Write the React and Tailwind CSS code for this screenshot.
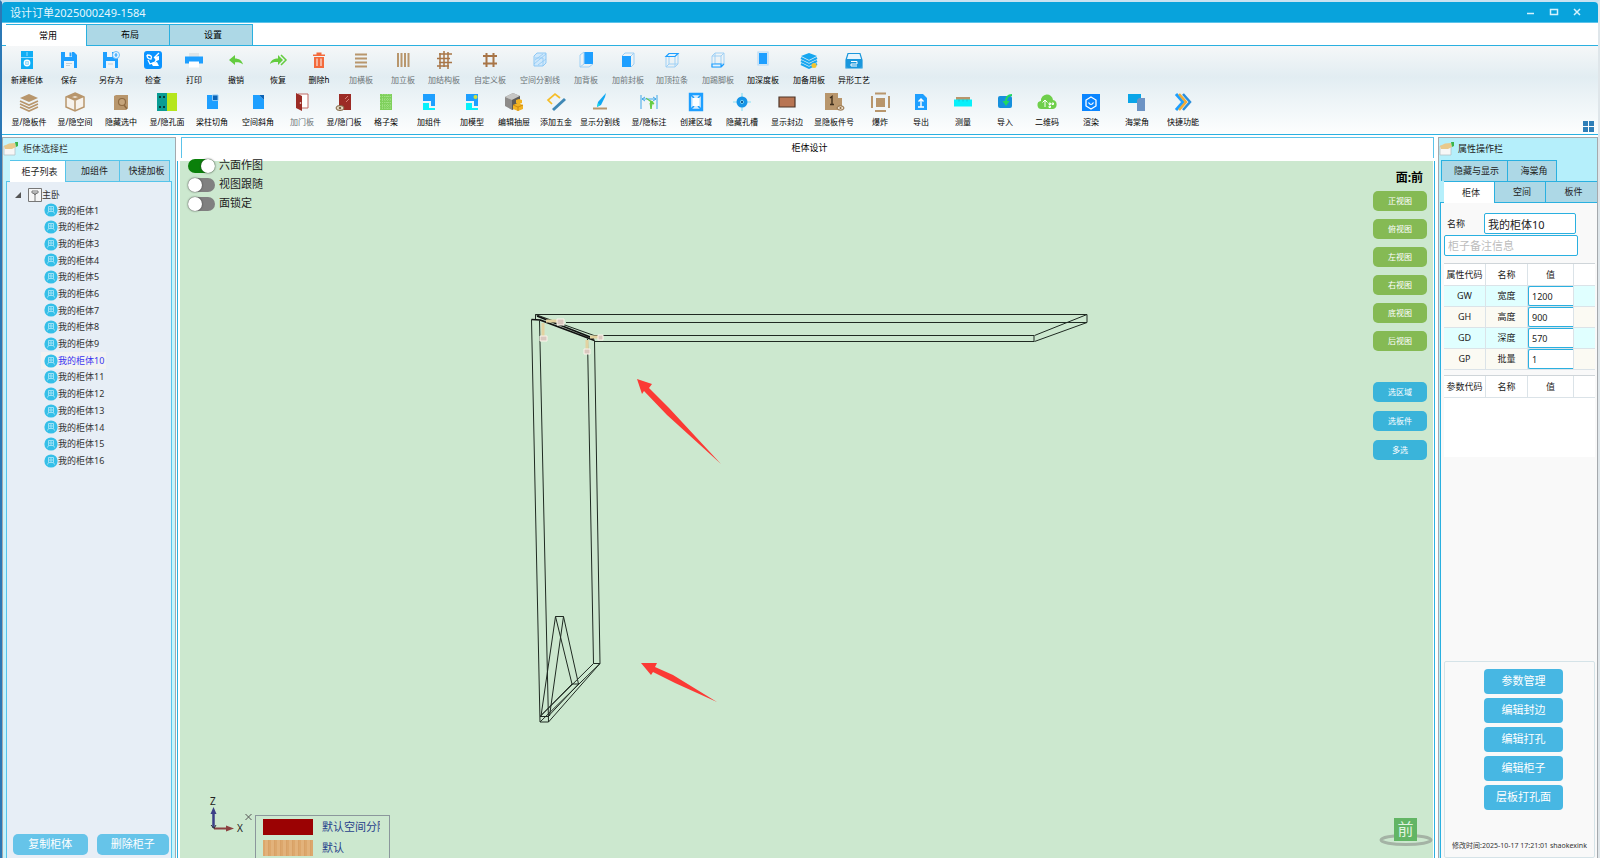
import React, { useState } from 'react';
import clsx from 'clsx';

const BLUE = '#1e9fff';
const WOOD = '#b8966c';

const Icon = ({ children }) => (
  <svg viewBox="0 0 18 18" className="h-[18px] w-[18px] overflow-visible" aria-hidden="true">
    {children}
  </svg>
);

const icons = {
  newCabinet: (
    <>
      <path d="M3 0h12v6H3zM3 7h12v11H3z" fill="#10aef5" />
      <path d="M3 6.500h12M9 1v4" stroke="#8fdcff" />
      <circle cx="9" cy="12" r="2.700" fill="none" stroke="#fff" strokeWidth="1.400" />
      <path d="M9 10v4M7 12h4" stroke="#fff" />
    </>
  ),
  save: (
    <>
      <path d="M1 1h13l3 3v13H1z" fill={BLUE} />
      <path d="M5 1h7v5H5zM4 10h10v7H4z" fill="#eef5fa" />
      <path d="M9.500 1.500h2v4h-2z" fill={BLUE} />
      <path d="M6 12.500h6M6 14.500h4" stroke="#b9c5cc" strokeWidth=".8" />
    </>
  ),
  saveAs: (
    <>
      <path d="M1 1h15v16H1z" fill={BLUE} />
      <path d="M5 1h5v5H5zM4 10h9v7H4z" fill="#eef5fa" />
      <path d="M6 13h5" stroke="#b9c5cc" strokeWidth=".8" />
      <circle cx="14" cy="4" r="3.500" fill="#eaf6ff" stroke="#6bbdf9" strokeWidth="1" />
      <path d="M14 2v4M12.500 4h3" stroke={BLUE} />
    </>
  ),
  check: (
    <>
      <rect width="18" height="18" rx="3" fill="#0a93ff" />
      <path d="M3 4q0 4 4 4 2-4-4-4M15 2l-5 5M4 9l2 4 5-2 3-4" fill="none" stroke="#fff" strokeWidth="1.300" />
      <path d="M10 6l5-1v4l-3 1zM7 12l6-1 2 4H9z" fill="#fff" />
    </>
  ),
  print: (
    <>
      <path d="M4 2h10v4H4z" fill="#dfe5e8" />
      <path d="M0 5.500h18v7H0z" fill={BLUE} />
      <path d="M4 10.500h10v6H4z" fill="#fff" />
    </>
  ),
  undo: <path d="M8 4v3.500c4 0 7 2 8 6-2-2-5-2.500-8-2.200V14L2 9z" fill="#63cc3f" />,
  redo: (
    <>
      <path d="M9 4v3.500C5 7.500 2 9 1 13c2-2 5-2.200 8-2V14l5-5z" fill="#63cc3f" />
      <path d="M12 4l5 5-5 5" fill="none" stroke="#63cc3f" strokeWidth="1.500" />
    </>
  ),
  trash: (
    <>
      <path d="M4 6h10v11H4zM3 3.500h12V5H3zM6.500 1.500h5v2h-5z" fill="#f36a3c" />
      <path d="M7 7.500V15M11 7.500V15" stroke="#fbe3da" strokeWidth="1.200" />
    </>
  ),
  hBoards: <path d="M3 3.500h12M3 7.500h12M3 11.500h12M3 15.500h12" stroke={WOOD} strokeWidth="2" />,
  vBoards: <path d="M4 2v14M7.500 2v14M11 2v14M14.500 2v14" stroke={WOOD} strokeWidth="2" />,
  structure: (
    <path
      d="M4 3h13M2 7.500h13M4 11.500h13M2 15h12M5 2v16M9 0v16M13 1v17"
      stroke="#a87547"
      strokeWidth="1.500"
    />
  ),
  custom: <path d="M2 5h14M2 12.500h14M5.500 2v14M12.500 2v14" stroke="#a87547" strokeWidth="2" />,
  split: (
    <>
      <path d="M3 5l3-3h9v10l-3 3H3z" fill="#cfe8fb" stroke="#8dc8f5" strokeWidth="1" />
      <path d="M3 13L15 3M4 7h8v8M4 9l8-6M7 14l8-6" fill="none" stroke="#8dc8f5" strokeWidth=".8" />
    </>
  ),
  back: (
    <>
      <path d="M7 1h9v12H7z" fill={BLUE} />
      <path d="M3 4l4-3v12l-4 3zM3 16h9l4-3" fill="none" stroke="#9fd0f5" strokeWidth="1" />
    </>
  ),
  front: (
    <>
      <path d="M6 2h9v11l-3 3" fill="none" stroke="#9fd0f5" strokeWidth="1" />
      <path d="M3 5h9v11H3z" fill={BLUE} />
      <path d="M3 5l3-3M12 5l3-3" stroke="#9fd0f5" />
    </>
  ),
  topRail: (
    <>
      <path d="M3 5h9v11H3zM6 2v11h9V2M3 16l3-3M12 16l3-3" fill="none" stroke="#9fd0f5" strokeWidth="1" />
      <path d="M3 5.500h9l3-3H6z" fill="#e4f3fd" stroke={BLUE} strokeWidth="1.200" />
    </>
  ),
  kick: (
    <>
      <path d="M3 5h9v11H3zM6 2h9v11H6zM3 5l3-3M12 5l3-3" fill="none" stroke="#9fd0f5" strokeWidth="1" />
      <path d="M3 13h9v3H3zM12 16l3-3" fill="#e4f3fd" stroke={BLUE} strokeWidth="1.200" />
    </>
  ),
  depth: (
    <>
      <path d="M5 2h8v11H5z" fill={BLUE} />
      <path d="M4 1h10v13H4z" fill="none" stroke="#b5d9f5" strokeWidth="1.200" />
    </>
  ),
  spare: (
    <>
      <path d="M9 2l8 3-8 4-8-4z" fill="#17a7f0" />
      <path d="M1 7l8 4 8-4M1 10l8 4 8-4M1 13l8 4 8-4" fill="none" stroke="#17a7f0" strokeWidth="2" />
      <circle cx="14" cy="14.500" r="2.500" fill="#f3c531" />
    </>
  ),
  special: (
    <>
      <path d="M1 9l2-6.500h12L17 9v8H1z" fill="#e6f4fc" stroke="#1a97dc" strokeWidth="1.200" />
      <path d="M1 8h16v7a2 2 0 0 1-2 2H3a2 2 0 0 1-2-2z" fill="#1a97dc" />
      <path d="M6 10.500h6v2.500H6v2h6" fill="none" stroke="#fff" />
    </>
  ),
  boards: (
    <>
      <path d="M9 1l9 4-9 4-9-4z" fill={WOOD} />
      <path d="M0 8l9 4 9-4M0 11l9 4 9-4M0 14l9 4 9-4" fill="none" stroke={WOOD} strokeWidth="1.600" />
    </>
  ),
  space: (
    <>
      <path d="M9 0l9 4v10l-9 4-9-4V4z" fill="#f6f2ec" stroke={WOOD} strokeWidth="1.500" />
      <path d="M0 4l9 4 9-4-9-4z" fill={WOOD} />
      <path d="M4 4l5-2 5 2-5 2zM9 8v10" fill="#e8dccb" stroke={WOOD} strokeWidth="1.500" />
    </>
  ),
  hideSelected: (
    <>
      <path d="M2 3l2-1h12v13l-2 2H2z" fill={WOOD} />
      <circle cx="10" cy="9" r="3.500" fill="#c5a47b" stroke="#8e6a41" strokeWidth="1.200" />
      <path d="M12 12l3 4" stroke="#8e6a41" strokeWidth="1.500" />
    </>
  ),
  holes: (
    <>
      <path d="M-1 0h10v18H-1z" fill="#0a9c94" />
      <path d="M9 0h10v18H9z" fill="#b5e61d" />
      <path d="M1 3h2v2H1zM5 3h2v2H5zM1 13h2v2H1zM5 13h2v2H5z" fill="#073c3a" />
    </>
  ),
  beam: (
    <>
      <path d="M4 2h11v14H4z" fill={BLUE} />
      <path d="M9.500 2H15v5.500H9.500z" fill="#0b63b5" stroke="#8cc8f5" />
    </>
  ),
  bevel: (
    <>
      <path d="M4 2h6l5 5v9H4z" fill={BLUE} />
      <path d="M10 2h5v5z" fill="#0b63b5" />
    </>
  ),
  door: (
    <>
      <path d="M5 1h10v14H8" fill="#fff" stroke="#c06a64" strokeWidth="1" />
      <path d="M3 0l6 3v15l-6-3z" fill="#9c2b25" />
      <circle cx="7.500" cy="10" r=".8" fill="#fff" />
    </>
  ),
  doorEye: (
    <>
      <path d="M4 1h12v16H4z" fill="#9c2b25" />
      <path d="M10 6l3-3M11 9l3-3" stroke="#d88078" />
      <ellipse cx="5" cy="15" rx="4" ry="2.500" fill="#e5d8c2" stroke="#7d6544" />
      <circle cx="5" cy="15" r="1.200" fill="#7d6544" />
    </>
  ),
  lattice: (
    <>
      <path d="M3 1h12v16H3z" fill="#7fd05c" />
      <path
        d="M3 3.500h12M3 6.500h12M3 9.500h12M3 12.500h12M3 15h12M5.500 1v16M8 1v16M10.500 1v16M13 1v16"
        stroke="#a5e38a"
        strokeWidth=".8"
        strokeDasharray="1 1"
      />
    </>
  ),
  component: (
    <>
      <path d="M3 1h12v12h-4V8H3z" fill={BLUE} />
      <path d="M3 10h6v5h6v2H3z" fill="#08f0fa" />
    </>
  ),
  model: (
    <>
      <path d="M3 1h12v12h-4V8H3z" fill={BLUE} />
      <path d="M3 10h6v5h6v2H3z" fill="#08f0fa" />
      <circle cx="12.500" cy="4" r="2" fill="#d3e23c" />
    </>
  ),
  drawer: (
    <>
      <path d="M0 4l8-4 7 3v9l-8 5-7-4z" fill="#8d8b89" />
      <path d="M0 4l8-4 7 3-8 4z" fill="#c6c6c5" />
      <path d="M7 7l8-4v9l-8 5z" fill="#5d5b59" />
      <path d="M8 12l5-2 5 2v4l-5 2-5-2zM11 7l3-1 3 1v3l-3 1-3-1z" fill="#f2b323" />
      <path d="M8 12l5 2 5-2M13 14v4" fill="none" stroke="#c47f0b" strokeWidth=".8" />
    </>
  ),
  hardware: (
    <>
      <path d="M5 11L1 7l7-6 5 4" fill="none" stroke="#f6bd27" strokeWidth="1.700" />
      <path d="M6 17L18 6" stroke="#3f88b5" strokeWidth="3" />
    </>
  ),
  splitLine: (
    <>
      <path d="M15 0L7 9l-1 5 4-2 4-8z" fill="#11a8f3" />
      <path d="M6 14l1-4 2 2z" fill="#19e0e6" />
      <path d="M2 15.500h14" stroke={WOOD} strokeWidth="2" />
    </>
  ),
  dimension: (
    <>
      <path d="M1 2v14M17 2v14M2 6h14M5 4L2 6l3 2M13 4l3 2-3 2" fill="none" stroke="#3fa7e8" strokeWidth="1" />
      <path d="M6 5l5 4-1 1 4 1-2-3M10 10l1 6 1-5" fill="#63cc3f" stroke="#63cc3f" />
    </>
  ),
  region: (
    <>
      <path d="M3 1h12v16H3z" fill="#d8edfc" stroke={BLUE} strokeWidth="2.400" />
      <path d="M3 1l4 4M15 1l-4 4M3 17l4-4M15 17l-4-4" stroke={BLUE} strokeWidth="1.600" />
      <path d="M6 5h6v8H6z" fill="#fff" />
    </>
  ),
  slot: (
    <>
      <path d="M0 9h18M9 0v18" stroke="#8adff5" strokeWidth="1.200" />
      <circle cx="9" cy="9" r="5.500" fill="#1695e8" />
      <circle cx="9" cy="9" r="1.600" fill="#0b4f8a" stroke="#8ee6ff" strokeWidth=".8" />
    </>
  ),
  edge: <path d="M1 4h16v10H1z" fill="#b87553" stroke="#4e3629" strokeWidth="1.200" />,
  boardNo: (
    <>
      <path d="M0 0h13v17H0zM13 5h4v12h-4z" fill={WOOD} />
      <path d="M5 5l2-1.500v8M5 11.500h4" fill="none" stroke="#3f2f1c" strokeWidth="1.400" />
      <ellipse cx="15.500" cy="15" rx="3.500" ry="2.200" fill="#e9dcc8" stroke="#8e6a41" />
      <circle cx="15.500" cy="15" r="1" fill="#8e6a41" />
    </>
  ),
  explode: (
    <>
      <path d="M5 5h9v9H5z" fill={WOOD} />
      <path d="M4 .5h11M4 18h11" stroke={WOOD} strokeWidth="2" />
      <path d="M1 3v12M18 3v12" fill="none" stroke={WOOD} strokeWidth="2" />
    </>
  ),
  exportFile: (
    <>
      <path d="M3 1h8l4 4v12H3z" fill={BLUE} />
      <path d="M9 14V6M6.500 8.500L9 6l2.500 2.500M6 14h6" fill="none" stroke="#fff" strokeWidth="1.400" />
    </>
  ),
  measure: (
    <>
      <path d="M2 4h14v3H2z" fill={WOOD} />
      <path d="M0 6.500h18v7H0z" fill="#08f0fa" />
      <path d="M5 6.500v2M9 6.500v2M13 6.500v2" stroke="#1ab8c9" strokeWidth=".8" />
    </>
  ),
  importFile: (
    <>
      <rect x="2" y="3" width="14" height="12" rx="2" fill="#1690dd" />
      <path d="M16 2c-4 0-6 2-6 7" fill="none" stroke="#22d860" strokeWidth="2" />
      <path d="M6.500 8h7L10 13z" fill="#22d860" />
    </>
  ),
  qr: (
    <>
      <path d="M4 16a4 4 0 0 1-1-8 6 6 0 0 1 12-1 4.600 4.600 0 0 1 0 9z" fill="#6fcf4b" />
      <path d="M7 14V7M4.500 9.500L7 7l2.500 2.500M11 10h1.500v1.500H11zM14 10h1.500v1.500H14zM11 13h1.500v1.500H11z" fill="none" stroke="#fff" />
    </>
  ),
  render: (
    <>
      <path d="M0 1h18v17H0z" fill="#0a85ff" />
      <path d="M9 4l5 3v6l-5 3-5-3V7z" fill="none" stroke="#fff" strokeWidth="1.300" />
      <path d="M6.500 9.500q2.500 4 5 0" fill="none" stroke="#fff" strokeWidth="1.200" />
    </>
  ),
  begonia: (
    <>
      <path d="M0 1h13v9H0z" fill="#0aa5e8" />
      <path d="M9 7l2-2h6v13H9z" fill="#6c93c4" />
    </>
  ),
  quick: (
    <>
      <path d="M2 1l7 8-7 8" fill="none" stroke={BLUE} strokeWidth="3" />
      <path d="M5 1l7 8-7 8" fill="none" stroke="#f0ac35" strokeWidth="2.500" />
      <path d="M9 1l7 8-7 8" fill="none" stroke="#2b8fdc" strokeWidth="2.500" />
    </>
  ),
};

const toolRows = [
  [
    ['新建柜体', 'newCabinet', 'w-[42px]'],
    ['保存', 'save', 'w-[42px]'],
    ['另存为', 'saveAs', 'w-[42px]'],
    ['检查', 'check', 'w-[42px]'],
    ['打印', 'print', 'w-[40px]'],
    ['撤销', 'undo', 'w-[44px]'],
    ['恢复', 'redo', 'w-[40px]'],
    ['删除h', 'trash', 'w-[42px]'],
    ['加横板', 'hBoards', 'w-[42px]', true],
    ['加立板', 'vBoards', 'w-[42px]', true],
    ['加结构板', 'structure', 'w-[40px]', true],
    ['自定义板', 'custom', 'w-[52px]', true],
    ['空间分割线', 'split', 'w-[48px]', true],
    ['加背板', 'back', 'w-[44px]', true],
    ['加前封板', 'front', 'w-[40px]', true],
    ['加顶拉条', 'topRail', 'w-[48px]', true],
    ['加踢脚板', 'kick', 'w-[44px]', true],
    ['加深度板', 'depth', 'w-[46px]'],
    ['加备用板', 'spare', 'w-[46px]'],
    ['异形工艺', 'special', 'w-[44px]'],
  ],
  [
    ['显/隐板件', 'boards', 'w-[46px]'],
    ['显/隐空间', 'space', 'w-[46px]'],
    ['隐藏选中', 'hideSelected', 'w-[46px]'],
    ['显/隐孔面', 'holes', 'w-[46px]'],
    ['梁柱切角', 'beam', 'w-[44px]'],
    ['空间斜角', 'bevel', 'w-[48px]'],
    ['加门板', 'door', 'w-[40px]', true],
    ['显/隐门板', 'doorEye', 'w-[44px]'],
    ['格子架', 'lattice', 'w-[40px]'],
    ['加组件', 'component', 'w-[46px]'],
    ['加模型', 'model', 'w-[40px]'],
    ['编辑抽屉', 'drawer', 'w-[44px]'],
    ['添加五金', 'hardware', 'w-[40px]'],
    ['显示分割线', 'splitLine', 'w-[48px]'],
    ['显/隐标注', 'dimension', 'w-[50px]'],
    ['创建区域', 'region', 'w-[44px]'],
    ['隐藏孔槽', 'slot', 'w-[48px]'],
    ['显示封边', 'edge', 'w-[42px]'],
    ['显隐板件号', 'boardNo', 'w-[52px]'],
    ['爆炸', 'explode', 'w-[40px]'],
    ['导出', 'exportFile', 'w-[42px]'],
    ['测量', 'measure', 'w-[42px]'],
    ['导入', 'importFile', 'w-[42px]'],
    ['二维码', 'qr', 'w-[42px]'],
    ['渲染', 'render', 'w-[46px]'],
    ['海棠角', 'begonia', 'w-[46px]'],
    ['快捷功能', 'quick', 'w-[46px]'],
  ],
];

const cabinets = Array.from({ length: 16 }, (_, i) => `我的柜体${i + 1}`);

const attributes = [
  { code: 'GW', name: '宽度', value: '1200' },
  { code: 'GH', name: '高度', value: '900' },
  { code: 'GD', name: '深度', value: '570' },
  { code: 'GP', name: '批量', value: '1' },
];

const TitleBar = () => (
  <header className="flex h-[21px] shrink-0 items-center justify-between rounded-t-[4px] border-b border-[#5cc3ea] bg-[#08a3dc] pr-[14px] pl-2 text-white">
    <h1 className="pt-[2px] text-[11px] leading-[18px] text-[#e4f6fd]">设计订单2025000249-1584</h1>
    <div className="flex items-center gap-[9px]">
      <button aria-label="最小化">
        <svg viewBox="0 0 14 14" className="h-[14px] w-[14px]"><path d="M3 8.500h7" stroke="#d5f2fd" strokeWidth="1.500" /></svg>
      </button>
      <button aria-label="最大化">
        <svg viewBox="0 0 14 14" className="h-[14px] w-[14px]"><path d="M3.500 4.500h7v5h-7z" fill="none" stroke="#d5f2fd" strokeWidth="1.500" /></svg>
      </button>
      <button aria-label="关闭">
        <svg viewBox="0 0 14 14" className="h-[14px] w-[14px]"><path d="M4 4l6 6M10 4l-6 6" stroke="#d5f2fd" strokeWidth="1.500" /></svg>
      </button>
    </div>
  </header>
);

const Ribbon = () => (
  <section className="shrink-0 border-b border-[#2ab0e0]">
    <div role="tablist" className="flex h-[23px] items-end border-b border-[#2ab0e0] bg-white pl-1 text-[9px]">
      <button role="tab" aria-selected="true" className="-mb-px h-[22px] w-[81px] border-t border-r border-[#2ab0e0] bg-white pl-1">常用</button>
      <button role="tab" aria-selected="false" className="h-[21px] w-[83px] border-t border-r border-[#2ab0e0] bg-[#add8e6] pl-1">布局</button>
      <button role="tab" aria-selected="false" className="h-[21px] w-[83px] border-t border-r border-[#2ab0e0] bg-[#add8e6] pl-1">设置</button>
    </div>
    <div className="flex items-end justify-between bg-linear-to-b from-[#f5f7f8] via-[#e2edf2] via-35% to-[#fdfefe] pt-[5px] pr-1 pb-[2px] pl-1">
      <div className="flex flex-col gap-[6px] pb-[3px]">
        {toolRows.map((row, i) => (
          <div key={i} className="flex">
            {row.map(([label, icon, width, disabled]) => (
              <button
                key={label}
                disabled={disabled}
                className={clsx('flex shrink-0 flex-col items-center gap-1', width, disabled ? 'text-[#6c7478]' : 'text-black')}
              >
                <Icon>{icons[icon]}</Icon>
                <span className="text-[8px] leading-[14px] whitespace-nowrap">{label}</span>
              </button>
            ))}
          </div>
        ))}
      </div>
      <button aria-label="布局网格" className="grid grid-cols-2 gap-px">
        {[0, 1, 2, 3].map((n) => (
          <span key={n} className="h-[5px] w-[5px] bg-[#2f7fb8]" />
        ))}
      </button>
    </div>
  </section>
);

const HandIcon = () => (
  <svg viewBox="0 0 16 14" className="h-[14px] w-4" aria-hidden="true">
    <path d="M1 4h11v9H1z" fill="#f7f7f7" stroke="#b8c3c7" strokeWidth=".8" />
    <path d="M1 4l5-2.500L12 1l1 4-4 2H2z" fill="#e9c98c" />
    <path d="M12 0h3v4l-2 1z" fill="#3bb54a" />
  </svg>
);

const CabinetIcon = () => (
  <svg viewBox="0 0 14 14" className="h-[14px] w-[14px]" aria-hidden="true">
    <circle cx="7" cy="7" r="6.600" fill="#35bfe8" />
    <path d="M4.500 8.500v-5h5v5M4.500 6h5M7 3.500v5M3.500 10.500l1-2h5l1 2" fill="none" stroke="#9ce1f6" />
  </svg>
);

const CabinetPanel = ({ current, onSelect }) => (
  <aside className="flex w-[174px] shrink-0 flex-col border-t border-r border-l border-[#a5a9ad] bg-[#c5f4fc]">
    <div className="flex h-[22px] shrink-0 items-center gap-1 text-[9px] text-[#333]">
      <HandIcon />
      <h2>柜体选择栏</h2>
    </div>
    <div role="tablist" className="mx-[3px] flex h-[22px] shrink-0 border-b border-[#56c4ea] pl-1 text-[9px] text-[#222]">
      <button role="tab" aria-selected="true" className="-mb-px w-[56px] border-t border-r border-[#56c4ea] bg-white pl-1">柜子列表</button>
      <button role="tab" aria-selected="false" className="w-[54px] border-t border-r border-[#56c4ea] bg-[#b9dde9] pl-1">加组件</button>
      <button role="tab" aria-selected="false" className="w-[50px] border-t border-r border-[#56c4ea] bg-[#b9dde9] pl-1">快捷加板</button>
    </div>
    <div className="mx-[3px] flex grow flex-col border-x border-[#56c4ea] bg-[#e7eef6] pt-[5px] text-[9px] text-[#333]">
      <div className="flex h-[15px] items-center">
        <svg viewBox="0 0 6 6" className="mr-[7px] ml-[8px] h-[6px] w-[6px]" aria-hidden="true"><path d="M6 0v6H0z" fill="#555" /></svg>
        <svg viewBox="0 0 14 14" className="h-[14px] w-[14px]" aria-hidden="true">
          <path d="M.5.5h13v13H.5z" fill="#f5f5f5" stroke="#777" />
          <path d="M7 5v8M4 3h6v2H4zM5 5l2 2 2-2" fill="none" stroke="#777" />
        </svg>
        <span>主卧</span>
      </div>
      <ul className="ml-[34px] grid h-[267px] auto-rows-fr justify-items-start">
        {cabinets.map((name) => (
          <li key={name} className={clsx('flex pr-[2px] pl-[3px]', name === current && 'bg-[#f2f2f2] text-[#3a33f0]')}>
            <button className="flex items-center" onClick={() => onSelect(name)}>
              <CabinetIcon />
              {name}
            </button>
          </li>
        ))}
      </ul>
      <div className="mt-auto flex gap-[9px] pr-[2px] pb-[3px] pl-[6px] text-[11px] text-white">
        <button className="h-[21px] w-[75px] rounded-[5px] bg-[#66c4e9]">复制柜体</button>
        <button className="h-[21px] w-[73px] rounded-[5px] bg-[#66c4e9]">删除柜子</button>
      </div>
    </div>
  </aside>
);

// Wireframe of the selected cabinet, in window coordinates shifted to the canvas.
const Wireframe = () => (
  <svg className="absolute inset-0 h-full w-full" aria-label="柜体线框">
    <g transform="translate(-180 -161)">
      <g fill="none" stroke="#1f2a22" strokeWidth="1">
        <path d="M535.500 320v-5.500H1087v8H566M594 335.500h440v6H594M1034.500 335.500L1087 314.500M1034.500 341.500L1087 322.500" />
        <path d="M535.500 314.500L594 335.500M531.500 319.500L540 722h8.500L539.500 320.500M587.500 339l6 324.500M594.500 340.500L600 663.500h-6.500" />
        <path d="M540 716.500l53.500-53M540 722l60-58.500M548.500 722l51.500-58.500M548.500 716L578.500 684H572l-31 31.500M540 716.500h9" />
        <path d="M541 716l14.500-99.500h8L549.500 716M555.500 616.500L572 684M563.500 616.500l15 67.500" />
      </g>
      <path d="M531.500 319.500l9 .5 54 20.500M540 320l48 18M537 316l57 22.500" fill="none" stroke="#111" strokeWidth="1.600" />
      <g stroke="#e3d2a0" strokeWidth="3" fill="none">
        <path d="M546 321h14M543 323v14M590 337h10M587 340v10" />
      </g>
      <path d="M557 319h7v6h-7zM540 336h7v5h-7zM598 335h5v5h-5zM584 349h6v5h-6z" fill="#d9c8bf" stroke="#fbf3ea" />
      <path d="M637 379l15 5-3 4 20 20 52 56-54-49-23-24-2 3z" fill="#fb3a35" />
      <path d="M641 663h16l-2 4 18 8 44 27-42-19-22-11-2 3z" fill="#fb3a35" />
    </g>
  </svg>
);

const Toggle = ({ label, defaultChecked }) => (
  <label className="flex h-[19px] items-center gap-1 text-[11px] text-[#222]">
    <input
      type="checkbox"
      role="switch"
      defaultChecked={defaultChecked}
      className="h-[14px] w-[27px] appearance-none rounded-full bg-[#808080] before:block before:h-[14px] before:w-[14px] before:rounded-full before:bg-white before:shadow-[0_0_2px_#333] checked:bg-[#0a800a] checked:before:ml-[13px]"
    />
    {label}
  </label>
);

const viewButton = 'h-5 w-[54px] rounded-[5px] text-[8px] text-white';

const DesignView = () => (
  <main className="flex min-w-0 grow flex-col border-x border-[#2ab0e0] bg-white">
    <div className="-mx-px flex h-[24px] shrink-0 items-start bg-white px-[4px] pr-px">
      <h2 className="flex h-[21px] grow items-center justify-center border border-b-0 border-[#5cc3ea] pl-1 text-[9px]">柜体设计</h2>
    </div>
    <div className="relative mr-px ml-[2px] grow bg-[#cce8cf]">
      <Wireframe />
      <div className="absolute -top-[5px] left-[8px] flex flex-col">
        <Toggle label="六面作图" defaultChecked />
        <Toggle label="视图跟随" />
        <Toggle label="面锁定" />
      </div>
      <div className="absolute top-[9px] right-[6px] flex flex-col gap-2">
        <strong className="mr-1 h-[13px] text-right text-[12px] leading-[16px]">面:前</strong>
        {['正视图', '俯视图', '左视图', '右视图', '底视图', '后视图'].map((view) => (
          <button key={view} className={clsx(viewButton, 'bg-[#85ba54]')}>{view}</button>
        ))}
        <div className="mt-[23px] flex flex-col gap-[9px]">
          {['选区域', '选板件', '多选'].map((mode) => (
            <button key={mode} className={clsx(viewButton, 'bg-[#3ab4da]')}>{mode}</button>
          ))}
        </div>
      </div>
      <div className="absolute bottom-0 left-[24px] flex items-end">
        <svg viewBox="0 0 41 44" className="mb-[20px] h-[44px] w-[41px]" aria-label="坐标轴">
          <text x="6" y="11" fontSize="10" fill="#222">Z</text>
          <text x="33" y="38" fontSize="10" fill="#222">X</text>
          <path d="M9.500 34V18" stroke="#3b3f87" strokeWidth="2.500" />
          <path d="M6.500 20l3-7 3 7z" fill="#3b3f87" />
          <path d="M10 34.500h14" stroke="#8b4040" strokeWidth="2" />
          <path d="M22 31.500l8 3-8 3z" fill="#8b4040" />
          <path d="M7 31l3 3.500 2-3.500" fill="none" stroke="#333" />
        </svg>
        <button aria-label="关闭图例" className="mr-[3px] mb-[37px] h-2 w-[7px]">
          <svg viewBox="0 0 7 8" className="h-2 w-[7px]"><path d="M.5 1l6 6M6.500 1l-6 6" stroke="#555" /></svg>
        </button>
        <ul className="flex h-[43px] w-[135px] flex-col gap-[5px] border border-b-0 border-[#8b979c] pt-[3px] pl-[7px] text-[11px] text-[#27408b]">
          <li className="flex h-4 items-center gap-[9px]">
            <span className="h-4 w-[50px] shrink-0 bg-[#9b0203]" />
            <span className="w-[58px] overflow-hidden leading-[16px] whitespace-nowrap">默认空间分隔</span>
          </li>
          <li className="flex h-4 items-center gap-[9px]">
            <span className="h-4 w-[50px] shrink-0 bg-[#dca76c] bg-[repeating-linear-gradient(90deg,#dca76c_0_2px,#e2b27b_2px_5px,#d8a166_5px_6px)]" />
            <span className="leading-[16px]">默认</span>
          </li>
        </ul>
      </div>
      <svg viewBox="0 0 54 30" className="absolute right-0 bottom-[11px] h-[30px] w-[54px]" aria-label="前视方向">
        <ellipse cx="27" cy="23" rx="25" ry="4.500" fill="none" stroke="#a4b3a5" strokeWidth="3" />
        <path d="M15 1h23v23H15z" fill="#62b565" />
        <text x="26.500" y="18" fontSize="16" textAnchor="middle" fill="#dff2df">前</text>
      </svg>
    </div>
  </main>
);

const cell = 'border-r border-b border-[#dbe3e8] p-0 font-normal';

const HeaderRow = ({ titles }) => (
  <tr className="h-[22px] bg-white">
    {titles.map((title) => (
      <th key={title} scope="col" className={cell}>{title}</th>
    ))}
    <td className="border-b border-[#dbe3e8]" />
  </tr>
);

const Columns = () => (
  <colgroup>
    <col className="w-[42px]" />
    <col className="w-[42px]" />
    <col className="w-[46px]" />
    <col />
  </colgroup>
);

const PropertyPanel = ({ name, onRename }) => (
  <aside className="flex w-[160px] shrink-0 flex-col border-t border-r border-l border-[#a5a9ad] bg-[#b5effb] text-[9px] text-[#222]">
    <div className="flex h-[22px] shrink-0 items-center gap-[3px]">
      <HandIcon />
      <h2>属性操作栏</h2>
    </div>
    <div role="tablist" className="flex shrink-0 flex-col">
      <div className="flex h-[21px] pl-[2px]">
        <button role="tab" aria-selected="false" className="w-[67px] border border-b-0 border-[#2ab0e0] bg-[#add8e6] pl-1">隐藏与显示</button>
        <button role="tab" aria-selected="false" className="w-[49px] border-t border-r border-[#2ab0e0] bg-[#add8e6] pl-1">海棠角</button>
      </div>
      <div className="ml-px flex h-[22px] border-b border-[#2ab0e0] pl-1">
        <button role="tab" aria-selected="true" className="-mb-px w-[51px] border-t border-r border-[#2ab0e0] bg-white pl-1">柜体</button>
        <button role="tab" aria-selected="false" className="w-[51px] border-t border-r border-[#2ab0e0] bg-[#add8e6] pl-1">空间</button>
        <button role="tab" aria-selected="false" className="grow border-t border-[#2ab0e0] bg-[#add8e6] pl-1">板件</button>
      </div>
    </div>
    <div className="ml-px flex grow flex-col border-l border-[#2ab0e0] bg-[#f9f9f9] pt-[10px] pr-[2px] pl-[3px]">
      <div className="flex items-center pl-[3px]">
        <label htmlFor="cabinet-name" className="w-[37px]">名称</label>
        <input
          id="cabinet-name"
          value={name}
          onChange={(e) => onRename(e.target.value)}
          className="h-[21px] w-[92px] rounded-[2px] border border-[#2ab0e0] bg-white px-[3px] text-[11px]"
        />
      </div>
      <input
        aria-label="柜子备注信息"
        placeholder="柜子备注信息"
        className="mt-px h-[21px] w-[134px] rounded-[2px] border border-[#2ab0e0] bg-white px-[3px] text-[11px] placeholder:text-[#bcbcbc]"
      />
      <table className="mt-[7px] w-full table-fixed border-separate border-spacing-0 border-t border-[#cfd5d9] text-center">
        <Columns />
        <thead>
          <HeaderRow titles={['属性代码', '名称', '值']} />
        </thead>
        <tbody>
          {attributes.map((attr) => (
            <tr key={attr.code} className="h-[21px] odd:bg-[#e0ffff] even:bg-[#fbfaf3]">
              <td className={cell}>{attr.code}</td>
              <td className={cell}>{attr.name}</td>
              <td className={cell}>
                <input
                  aria-label={attr.name}
                  defaultValue={attr.value}
                  className="block h-[20px] w-full rounded-l-[2px] border border-r-0 border-[#2ab0e0] bg-white px-[3px]"
                />
              </td>
              <td className="border-b border-[#dbe3e8]" />
            </tr>
          ))}
        </tbody>
      </table>
      <div className="mt-[5px] h-[82px] border-t border-[#cfd5d9] bg-white">
        <table className="w-full table-fixed border-separate border-spacing-0 text-center">
          <Columns />
          <thead>
            <HeaderRow titles={['参数代码', '名称', '值']} />
          </thead>
        </table>
      </div>
      <div className="mt-auto flex h-[197px] flex-col items-center rounded-[2px] border border-[#d5e3e8] pt-[7px]">
        <div className="ml-2 flex flex-col gap-1 text-[11px] text-white">
          {['参数管理', '编辑封边', '编辑打孔', '编辑柜子', '层板打孔面'].map((action) => (
            <button key={action} className="h-[25px] w-[79px] rounded-[4px] bg-[#47b7e3]">{action}</button>
          ))}
        </div>
        <p className="mt-auto mb-1 text-[7px] leading-[14px] whitespace-nowrap text-[#333]">修改时间:2025-10-17 17:21:01 shaokexink</p>
      </div>
    </div>
  </aside>
);

const App = () => {
  const [current, setCurrent] = useState('我的柜体10');
  const [name, setName] = useState('我的柜体10');

  const selectCabinet = (cabinet) => {
    setCurrent(cabinet);
    setName(cabinet);
  };

  return (
    <div className="flex h-screen flex-col overflow-hidden border-t-2 border-r-2 border-l-2 border-t-[#c9e2f1] border-r-[#dfe6ea] border-l-[#2c78b5] bg-[#c9e2f1] font-['Noto_Sans','Noto_Sans_CJK_SC',sans-serif] text-black">
      <TitleBar />
      <Ribbon />
      <div className="flex min-h-0 grow gap-px bg-white pt-[2px]">
        <CabinetPanel current={current} onSelect={selectCabinet} />
        <DesignView />
        <div className="w-px shrink-0" />
        <PropertyPanel name={name} onRename={setName} />
      </div>
    </div>
  );
};

export default App;
